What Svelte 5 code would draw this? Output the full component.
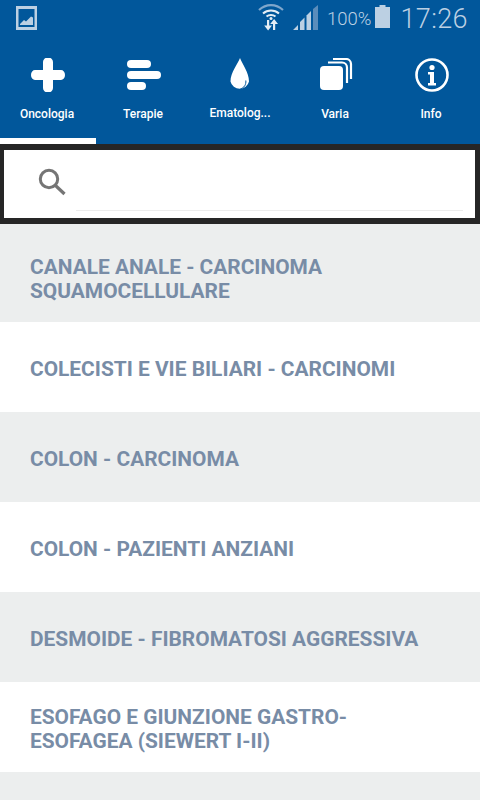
<script>
  const tabs = [
    { label: "Oncologia", icon: "plus" },
    { label: "Terapie", icon: "bars" },
    { label: "Ematolog...", icon: "drop" },
    { label: "Varia", icon: "cards" },
    { label: "Info", icon: "info" }
  ];

  const items = [
    "CANALE ANALE - CARCINOMA SQUAMOCELLULARE",
    "COLECISTI E VIE BILIARI - CARCINOMI",
    "COLON - CARCINOMA",
    "COLON - PAZIENTI ANZIANI",
    "DESMOIDE - FIBROMATOSI AGGRESSIVA",
    "ESOFAGO E GIUNZIONE GASTRO-ESOFAGEA (SIEWERT I-II)"
  ];

  let active = 0;
</script>

<main class="screen">
  <header class="appbar">
    <div class="status">
      <svg class="pic" width="21" height="24" viewBox="0 0 21 24">
        <path d="M0 0h21v24H0z M2.500 3v18h16V3z" fill-rule="evenodd" fill="#bcd0e3" />
        <path d="M4 18l4-4 2 1.500 5-5 2 1V19H4z" fill="#bcd0e3" />
      </svg>
      <span class="spacer"></span>
      <svg class="wifi" width="26" height="27" viewBox="0 0 26 27">
        <path d="M1 6C8 -.5 18 -.5 25 6" fill="none" stroke="#7fa6cb" stroke-width="2.200" />
        <path d="M5 9.500C9.500 5.500 16.500 5.500 21 9.500" fill="none" stroke="#e4edf5" stroke-width="2" />
        <path d="M8.500 12.500C11 10.500 15 10.500 17.500 12.500" fill="none" stroke="#e4edf5" stroke-width="2" />
        <circle cx="13" cy="14.500" r="1.500" fill="#e4edf5" />
        <path d="M9 16h2.200v5.500H14L10.100 26.500 6.200 21.500H9z" fill="#e4edf5" />
        <path d="M15 26h2.200v-6H20l-3.900-5-3.900 5H15z" fill="#e4edf5" />
      </svg>
      <svg class="signal" width="25" height="25" viewBox="0 0 25 25">
        <path d="M0 25l5-5v5z M7 25v-8l4.500-4.500V25z" fill="#bcd0e3" />
        <path d="M13.500 25V10.500L18 6v19z" fill="#bcd0e3" />
        <path d="M20 25V4l5-4v25z" fill="#5b8dbb" />
      </svg>
      <span class="pct">100%</span>
      <svg class="battery" width="15" height="23" viewBox="0 0 15 23">
        <path d="M4.500 0h6v2H15v21H0V2h4.500z" fill="#bcd0e3" />
      </svg>
      <span class="clock">17:26</span>
    </div>

    <nav class="tabs">
      {#each tabs as tab, i}
        <button class="tab" class:on={i === active} onclick={() => (active = i)}>
          <span class="icon">
            {#if tab.icon === "plus"}
              <svg width="34" height="34" viewBox="0 0 34 34">
                <path d="M12 4a5 4.500 0 0 1 10 0v8h8a4 5 0 0 1 0 10h-8v8a5 4.500 0 0 1-10 0v-8H4a4 5 0 0 1 0-10h8z" fill="#fff" />
              </svg>
            {:else if tab.icon === "bars"}
              <svg width="34" height="30" viewBox="0 0 34 30">
                <rect x="0" y="0" width="24" height="8" rx="4" fill="#fff" />
                <rect x="0" y="11" width="34" height="8" rx="4" fill="#fff" />
                <rect x="0" y="22" width="19" height="8" rx="4" fill="#fff" />
              </svg>
            {:else if tab.icon === "drop"}
              <svg width="20" height="34" viewBox="0 0 20 34">
                <path d="M10 0C12 6 19 14 19 23.500A9.500 9.500 0 0 1 .500 23.500C.500 14 8 6 10 0z" fill="#fff" />
                <path d="M15.800 22.500c.6 4-1.800 7.500-5.300 8.300" fill="none" stroke="#01579b" stroke-width="1" />
              </svg>
            {:else if tab.icon === "cards"}
              <svg width="34" height="34" viewBox="0 0 34 34">
                <path d="M14 1h13a5 5 0 0 1 5 5v15" fill="none" stroke="#fff" stroke-width="2.200" />
                <path d="M9 4.500h14a5 5 0 0 1 5 5V25" fill="none" stroke="#fff" stroke-width="2.200" />
                <rect x="1" y="8" width="23" height="24" rx="4" fill="#fff" />
              </svg>
            {:else}
              <svg width="34" height="34" viewBox="0 0 34 34">
                <circle cx="17" cy="17" r="15.500" fill="none" stroke="#fff" stroke-width="2.600" />
                <circle cx="17" cy="9.500" r="2.600" fill="#fff" />
                <path d="M13 14h6v11h2v2.500h-8V25h2v-8.500h-2z" fill="#fff" />
              </svg>
            {/if}
          </span>
          <span class="label" class:raised={tab.icon === "drop"}>{tab.label}</span>
        </button>
      {/each}
    </nav>
  </header>

  <section class="searchwrap">
    <div class="searchbox">
      <svg class="lens" width="28" height="28" viewBox="0 0 28 28">
        <circle cx="11" cy="11" r="8.700" fill="none" stroke="#757575" stroke-width="3" />
        <path d="M17.500 17.500L26.500 26" stroke="#757575" stroke-width="3.200" fill="none" />
      </svg>
      <input class="query" type="text" />
    </div>
  </section>

  <ul class="list">
    {#each items as item, i}
      <li class="row" class:alt={i % 2 === 0} class:first={i === 0}>{item}</li>
    {/each}
  </ul>
</main>

<style>
  :global(body) {
    margin: 0;
    font-family: Roboto, "Liberation Sans", sans-serif;
    background-color: #fff;
  }

  .screen {
    display: flex;
    flex-direction: column;
    height: 800px;
    overflow: hidden;
  }

  .appbar {
    background-color: #01579b;
  }

  .status {
    display: flex;
    align-items: flex-start;
    height: 48px;
    padding: 5px 12px 0 16px;
    box-sizing: border-box;
    color: #bcd0e3;
  }

  .spacer {
    flex: 1;
  }

  .pic {
    margin-top: 1px;
  }

  .wifi {
    margin-top: -1px;
  }

  .signal {
    margin-left: 9px;
  }

  .pct {
    margin-left: 9px;
    margin-top: 3px;
    font-size: 18.5px;
    line-height: 22px;
    font-weight: 300;
  }

  .battery {
    margin-left: 4px;
  }

  .clock {
    margin-left: 10px;
    margin-top: -1px;
    font-size: 27px;
    line-height: 30px;
    font-weight: 300;
    letter-spacing: 0.4px;
  }

  .tabs {
    display: flex;
    height: 96px;
  }

  .tab {
    flex: 1;
    display: flex;
    flex-direction: column;
    align-items: center;
    padding: 0;
    border: 0;
    border-bottom: 6px solid transparent;
    background: none;
    color: #fff;
    font-family: inherit;
  }

  .tab.on {
    border-bottom-color: #fff;
  }

  .icon {
    display: flex;
    align-items: center;
    justify-content: center;
    height: 34px;
    margin-top: 10px;
  }

  .label {
    margin: 14px 2px 0 0;
    font-size: 12px;
    line-height: 16px;
    font-weight: 500;
  }

  .label.raised {
    margin: 13px 0 0;
  }

  .searchwrap {
    background-color: #262626;
    padding: 6px 5px 6px 4px;
  }

  .searchbox {
    display: flex;
    height: 68px;
    background-color: #fff;
    box-sizing: border-box;
    padding: 0 12px 0 34px;
  }

  .lens {
    margin-top: 18px;
  }

  .query {
    flex: 1;
    min-width: 0;
    height: 60px;
    margin-left: 10px;
    padding: 0;
    border: 0;
    border-bottom: 1px solid #ececec;
    outline: none;
    background: none;
  }

  .list {
    flex: 1;
    margin: 0;
    padding: 0;
    list-style: none;
    background-color: #eceeee;
  }

  .row {
    display: flex;
    align-items: center;
    height: 90px;
    box-sizing: border-box;
    padding: 4px 44px 0 30px;
    background-color: #fff;
    color: #788ca6;
    font-size: 20.9px;
    line-height: 24px;
    font-weight: 700;
  }

  .row.alt {
    background-color: #eceeee;
  }

  .row.first {
    height: 98px;
    padding-top: 12px;
  }
</style>
